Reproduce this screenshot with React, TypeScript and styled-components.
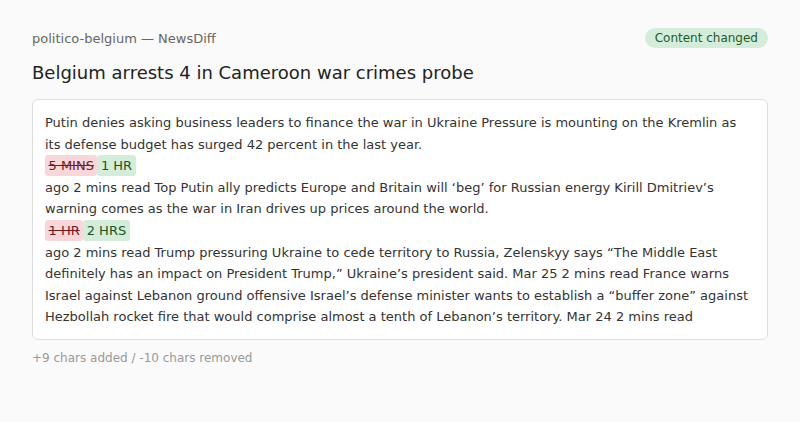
import React from "react";
import styled, { createGlobalStyle } from "styled-components";

const GlobalStyle = createGlobalStyle`
  html, body {
    margin: 0;
    padding: 0;
    background: #fafafa;
  }
  body {
    font-family: "DejaVu Sans", "Liberation Sans", sans-serif;
    color: #222;
  }
`;

type Part = { kind: "text" | "del" | "ins"; value: string };

const parts: Part[] = [
  {
    kind: "text",
    value:
      "Putin denies asking business leaders to finance the war in Ukraine Pressure is mounting on the Kremlin as its defense budget has surged 42 percent in the last year.\n",
  },
  { kind: "del", value: "5 MINS" },
  { kind: "ins", value: "1 HR" },
  {
    kind: "text",
    value:
      "\nago 2 mins read Top Putin ally predicts Europe and Britain will \u2018beg\u2019 for Russian energy Kirill Dmitriev\u2019s warning comes as the war in Iran drives up prices around the world.\n",
  },
  { kind: "del", value: "1 HR" },
  { kind: "ins", value: "2 HRS" },
  {
    kind: "text",
    value:
      "\nago 2 mins read Trump pressuring Ukraine to cede territory to Russia, Zelenskyy says \u201cThe Middle East definitely has an impact on President Trump,\u201d Ukraine\u2019s president said. Mar 25 2 mins read France warns Israel against Lebanon ground offensive Israel\u2019s defense minister wants to establish a \u201cbuffer zone\u201d against Hezbollah rocket fire that would comprise almost a tenth of Lebanon\u2019s territory. Mar 24 2 mins read",
  },
];

const App = () => {
  return (
    <>
      <GlobalStyle />
      <StylePage>
        <StyleHeader>
          <StyleSource>politico-belgium — NewsDiff</StyleSource>
          <StyleBadge>Content changed</StyleBadge>
        </StyleHeader>
        <StyleTitle>Belgium arrests 4 in Cameroon war crimes probe</StyleTitle>
        <StyleCard>
          {parts.map((p, i) =>
            p.kind === "del" ? (
              <StyleDel key={i}>{p.value}</StyleDel>
            ) : p.kind === "ins" ? (
              <StyleIns key={i}>{p.value}</StyleIns>
            ) : (
              <React.Fragment key={i}>{p.value}</React.Fragment>
            )
          )}
        </StyleCard>
        <StyleFooter>+9 chars added / -10 chars removed</StyleFooter>
      </StylePage>
    </>
  );
};

const StylePage = styled.div`
  padding: 28px 32px;
`;

const StyleHeader = styled.div`
  display: flex;
  align-items: center;
  justify-content: space-between;
`;

const StyleSource = styled.div`
  font-size: 13px;
  color: #666;
`;

const StyleBadge = styled.div`
  background: #d4edda;
  color: #1e5a2b;
  font-size: 12px;
  padding: 3px 10px;
  border-radius: 10px;
`;

const StyleTitle = styled.h1`
  margin: 14px 0 16px;
  font-size: 18px;
  font-weight: normal;
  color: #222;
`;

const StyleCard = styled.div`
  background: #fff;
  border: 1px solid #ddd;
  border-radius: 6px;
  padding: 12px 12px 11px;
  font-size: 13px;
  line-height: 21.6px;
  color: #333;
  white-space: pre-wrap;
`;

const StyleDel = styled.del`
  background: #f8d7da;
  color: #721c24;
  padding: 3px 3.5px;
  border-radius: 3px;
`;

const StyleIns = styled.ins`
  background: #d4edda;
  color: #155724;
  text-decoration: none;
  padding: 3px 3.5px;
  border-radius: 3px;
`;

const StyleFooter = styled.div`
  margin-top: 11px;
  font-size: 12px;
  color: #999;
`;

export default App;
